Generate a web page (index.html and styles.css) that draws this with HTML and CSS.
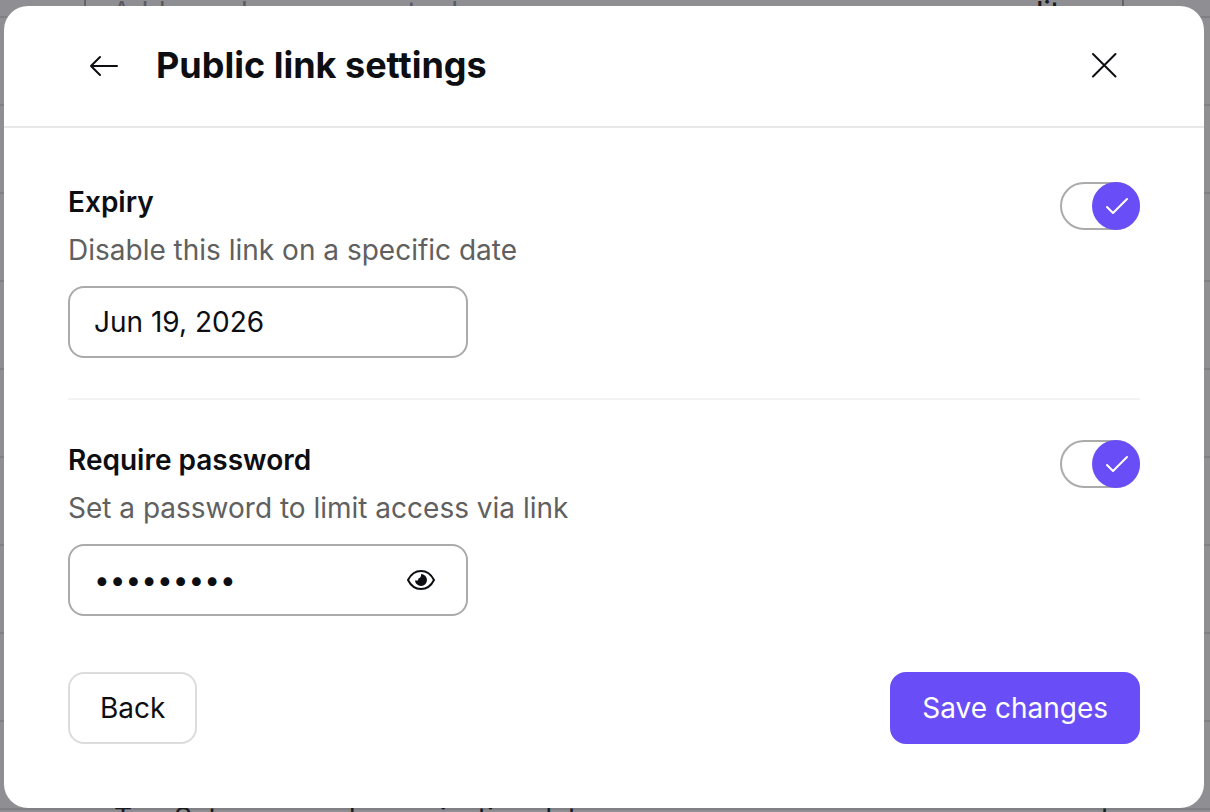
FILE: index.html
```
<!DOCTYPE html>
<html lang="en">
<head>
  <meta charset="UTF-8">
  <title>Public link settings</title>
  <link rel="stylesheet" href="styles.css">
</head>
<body>

  <!-- Dimmed page behind the dialog -->
  <div class="backdrop" aria-hidden="true">
    <div class="share-row">
      <span class="share-hint">Add people or groups to do</span>
      <span class="share-role">edit</span>
    </div>
    <div class="task-row">
      <span class="task-icon">T</span>
      <span>Set users and organization data</span>
      <span class="task-end">t</span>
    </div>
  </div>

  <form class="modal" role="dialog" aria-labelledby="modalTitle">
    <header class="modal-header">
      <button type="button" class="icon-btn" aria-label="Go back">
        <svg width="32" height="32" viewBox="0 0 32 32"><path d="M29 17H3M12 8l-9 9 9 9"/></svg>
      </button>
      <h1 id="modalTitle">Public link settings</h1>
      <button type="button" class="icon-btn" aria-label="Close">
        <svg width="32" height="32" viewBox="0 0 32 32"><path d="M5 5l22.500 22.500M27.500 5L5 27.500"/></svg>
      </button>
    </header>

    <div class="modal-body">
      <section class="setting">
        <div class="setting-main">
          <label class="setting-title" for="expiryDate">Expiry</label>
          <p>Disable this link on a specific date</p>
          <div class="field">
            <input type="text" id="expiryDate" value="Jun 19, 2026">
          </div>
        </div>
        <label class="toggle">
          <input type="checkbox" aria-label="Expiry" checked>
          <span class="knob">
            <svg width="48" height="48" viewBox="0 0 48 48"><path d="M15 25l6 6 14-14"/></svg>
          </span>
        </label>
      </section>

      <section class="setting">
        <div class="setting-main">
          <label class="setting-title" for="linkPassword">Require password</label>
          <p>Set a password to limit access via link</p>
          <div class="field">
            <input type="password" id="linkPassword" value="password1">
            <button type="button" class="icon-btn eye" aria-label="Show password">
              <svg width="32" height="32" viewBox="0 0 32 32">
                <path d="M2 16C5 10 9.500 7 15 7s10 3 13 9c-3 6-7.500 9-13 9S5 22 2 16z"/>
                <path class="pupil" d="M15 10a6 6 0 1 1-6 6.200c1.400.5 2.800.4 3.300-.2-.4-1 0-1.800 1.300-2.100.9-.3 1.700-1.800 1.400-3.900z"/>
              </svg>
            </button>
          </div>
        </div>
        <label class="toggle">
          <input type="checkbox" aria-label="Require password" checked>
          <span class="knob">
            <svg width="48" height="48" viewBox="0 0 48 48"><path d="M15 25l6 6 14-14"/></svg>
          </span>
        </label>
      </section>

      <footer class="actions">
        <button type="button" class="btn">Back</button>
        <button type="submit" class="btn btn-primary">Save changes</button>
      </footer>
    </div>
  </form>

</body>
</html>
```
FILE: styles.css
```
* {
  box-sizing: border-box;
}
body {
  margin: 0;
  padding: 6px 6px 4px 4px;
  font-family: Inter, "Liberation Sans", sans-serif;
  font-size: 28px;
  line-height: 40px;
  color: #0d0e12;
}
button, input {
  font: inherit;
  color: inherit;
}

/* page behind */
.backdrop {
  position: fixed;
  inset: 0;
  z-index: -1;
  overflow: hidden;
  display: flex;
  flex-direction: column;
  justify-content: space-between;
  background: repeating-linear-gradient(#8f8e93 0 16px, #807f83 16px 18px, #8f8e93 18px 88px);
}
.share-row {
  display: flex;
  justify-content: space-between;
  height: 40px;
  margin: -8px 86px 0 84px;
  padding: 0 62px 0 26px;
  border: 2px solid #656468;
  border-width: 0 2px;
  background: #8f8e93;
}
.share-hint { color: #5b5a5f; }
.share-role {
  color: #1a1a20;
  font-weight: 500;
}
.task-row {
  display: flex;
  height: 40px;
  margin-bottom: -36px;
  padding: 0 100px 0 114px;
  line-height: 20px;
  color: #1a1a20;
}
.task-icon { width: 60px; }
.task-end { margin-left: auto; }

/* dialog */
.modal {
  border-radius: 24px;
  background: #fff;
}
.modal-header {
  display: flex;
  align-items: center;
  gap: 36px;
  padding: 38px 84px 40px;
  border-bottom: 2px solid #e8e8e8;
}
.modal-header h1 {
  flex: 1;
  margin: 0;
  font-size: 36px;
  line-height: 42px;
  font-weight: 650;
}
.icon-btn {
  display: flex;
  padding: 0;
  border: none;
  background: none;
  cursor: pointer;
}
svg {
  fill: none;
  stroke: currentColor;
  stroke-width: 2;
  stroke-linecap: round;
  stroke-linejoin: round;
}
.modal-body {
  padding: 14px 64px 64px;
}
.setting {
  display: flex;
  justify-content: space-between;
  align-items: flex-start;
  padding: 40px 0;
}
.setting + .setting {
  border-top: 2px solid #f3f3f3;
}
.setting-title {
  font-weight: 600;
}
.setting p {
  margin: 8px 0 16px;
  color: #606060;
}
.field {
  display: flex;
  align-items: center;
  width: 400px;
  height: 72px;
  padding: 0 28px 0 24px;
  border: 2px solid #ababab;
  border-radius: 16px;
}
.field input {
  flex: 1;
  min-width: 0;
  padding: 0;
  border: none;
  outline: none;
  background: none;
}
.eye .pupil {
  fill: currentColor;
  stroke: none;
}
.toggle {
  display: flex;
  justify-content: flex-end;
  position: relative;
  width: 80px;
  height: 48px;
}
.toggle input {
  appearance: none;
  position: absolute;
  inset: 0;
  margin: 0;
  border: 2px solid #ababab;
  border-radius: 24px;
  cursor: pointer;
}
.knob {
  position: relative;
  width: 48px;
  height: 48px;
  border-radius: 50%;
  background: #694ef7;
  color: #fff;
  pointer-events: none;
}
.actions {
  display: flex;
  justify-content: space-between;
  padding-top: 16px;
}
.btn {
  height: 72px;
  padding: 0 30px;
  border: 2px solid #dcdcdc;
  border-radius: 16px;
  background: #fff;
  cursor: pointer;
}
.btn-primary {
  border-color: #694ef7;
  background: #694ef7;
  color: #fff;
}
```
